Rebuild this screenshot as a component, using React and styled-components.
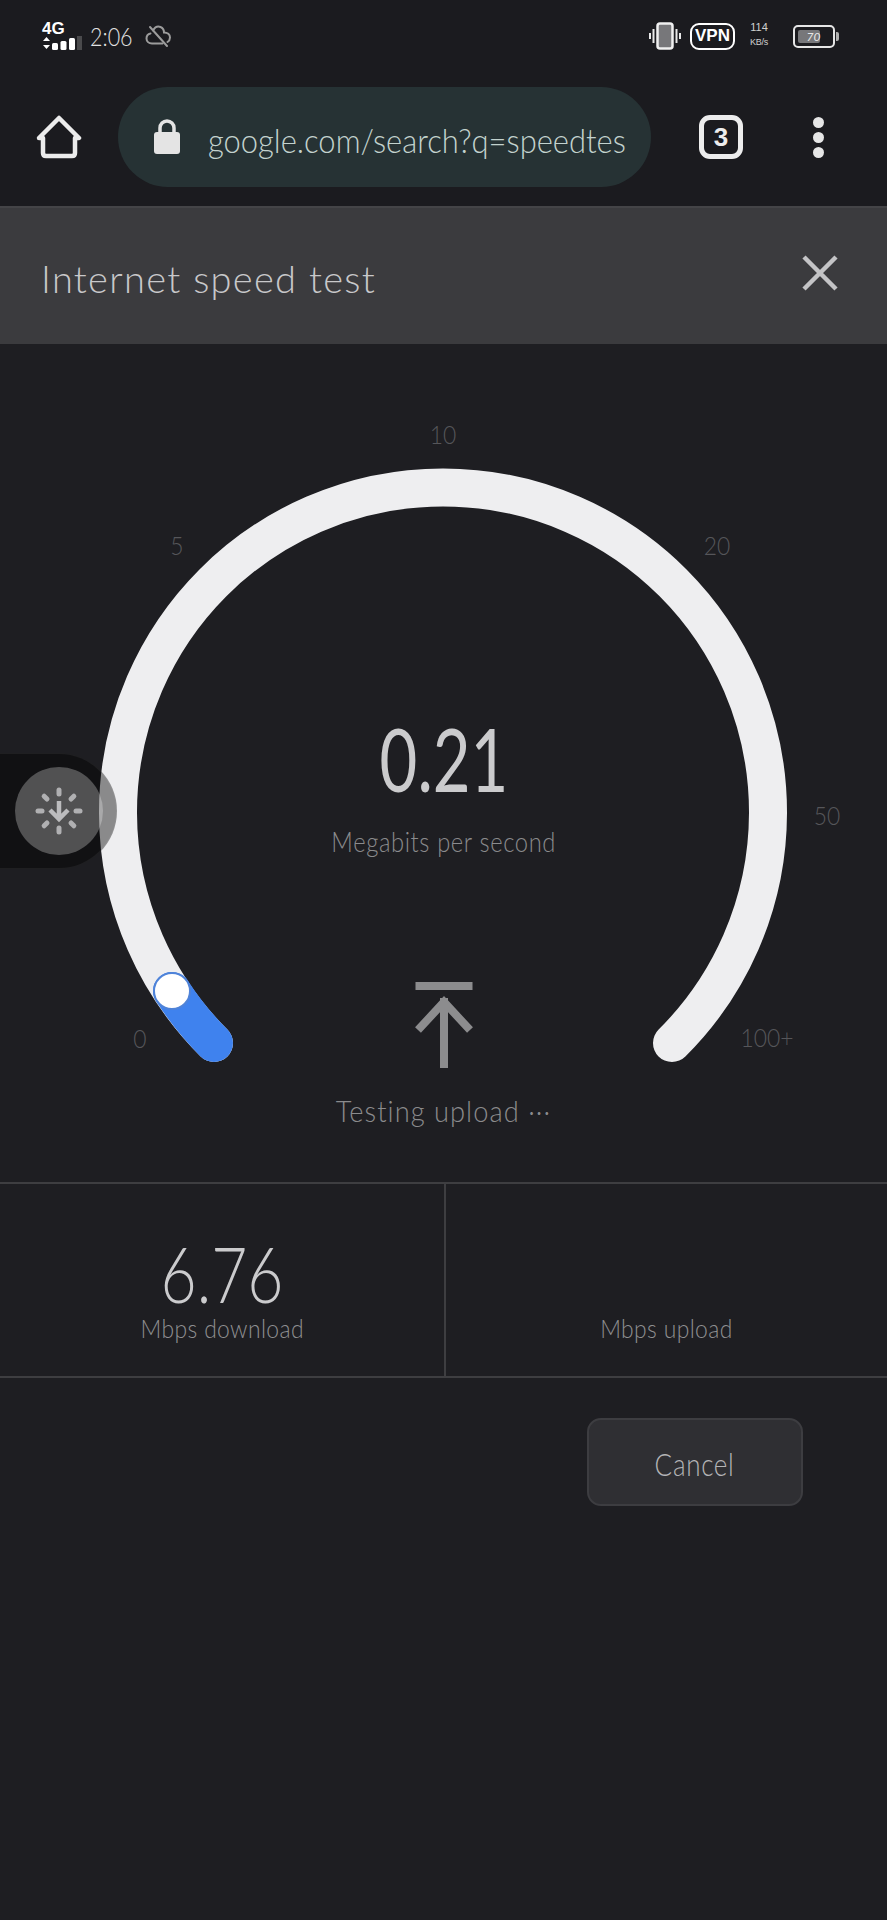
import React from "react";
import styled, { createGlobalStyle } from "styled-components";

const hand = `"Lato", "Open Sans", sans-serif`;

const GlobalStyle = createGlobalStyle`
  html, body {
    margin: 0;
    padding: 0;
    background: #1e1e22;
  }
  * {
    box-sizing: border-box;
  }
`;

const Page = styled.div`
  width: 887px;
  height: 1920px;
  background: #1e1e22;
  overflow: hidden;
  font-family: ${hand};
`;

const TopArea = styled.div`
  background: #1b1b1f;
`;

const StatusBar = styled.div`
  height: 68px;
  display: flex;
  align-items: center;
  justify-content: space-between;
  padding: 4px 49px 0 42px;
`;

const StatusGroup = styled.div`
  display: flex;
  align-items: center;
  gap: ${({ $gap }) => $gap}px;
`;

const NetworkBadge = styled.div`
  display: flex;
  flex-direction: column;
  width: 40px;
  color: #fff;
  font: 700 17px/14px "Liberation Sans", sans-serif;
`;

const Clock = styled.span`
  width: 39px;
  color: #e2e2e2;
  font: 300 25px "Lato", sans-serif;
  transform: scaleX(0.86);
  transform-origin: left center;
  white-space: nowrap;
`;

const CloudIcon = styled.svg`
  margin-left: 8px;
`;

const VpnBadge = styled.span`
  width: 45px;
  height: 27px;
  border: 2.5px solid #fff;
  border-radius: 9px;
  display: flex;
  align-items: center;
  justify-content: center;
  color: #fff;
  font: 700 17px "Liberation Sans", sans-serif;
`;

const SpeedStack = styled.div`
  width: 20px;
  display: flex;
  flex-direction: column;
  align-items: center;
  color: #d0d0d0;
  font: 400 11px/15px "Liberation Sans", sans-serif;
  margin: -2px 15px 0 5px;
`;

const SpeedUnit = styled.span`
  font-size: 9px;
  letter-spacing: -0.3px;
`;

const Battery = styled.div`
  position: relative;
  width: 42px;
  height: 23px;
  border: 2px solid #e6e6e6;
  border-radius: 5px;
  padding: 3px;
  margin-right: 3px;

  &::after {
    content: "";
    position: absolute;
    right: -6px;
    top: 5px;
    width: 3px;
    height: 9px;
    border-radius: 0 2px 2px 0;
    background: #b0b0b0;
  }
`;

const BatteryFill = styled.div`
  width: ${({ $level }) => $level}%;
  height: 100%;
  background: #77777a;
  border-radius: 2px;
  color: #e8e8e8;
  font: italic 400 12px/13px "Lato", sans-serif;
  text-align: right;
`;

const Toolbar = styled.div`
  height: 138px;
  display: flex;
  align-items: center;
  padding: 0 0 0 36px;
`;

const UrlPill = styled.div`
  width: 533px;
  height: 100px;
  margin-left: 36px;
  border-radius: 50px;
  background: #263234;
  display: flex;
  align-items: center;
  padding: 0 0 0 35px;
  gap: 27px;
  flex-shrink: 0;
`;

const UrlText = styled.span`
  margin-top: 4px;
  color: #c3d2ce;
  font: 300 34px "Lato", sans-serif;
  white-space: nowrap;
  transform: scaleX(0.91);
  transform-origin: left center;
`;

const TabCount = styled.div`
  width: 44px;
  height: 44px;
  margin-left: 48px;
  border: 5px solid #ededed;
  border-radius: 11px;
  display: flex;
  align-items: center;
  justify-content: center;
  color: #ededed;
  font: 700 26px "Liberation Sans", sans-serif;
`;

const MenuDots = styled.div`
  margin-left: 70px;
  display: flex;
  flex-direction: column;
  gap: 4px;
`;

const Dot = styled.span`
  width: 11px;
  height: 11px;
  border-radius: 50%;
  background: #e6e6e6;
`;

const DialogHeader = styled.div`
  height: 138px;
  background: #3b3b3e;
  border-top: 2px solid #444447;
  display: flex;
  align-items: center;
  justify-content: space-between;
  padding: 0 49px 6px 41px;
`;

const DialogTitle = styled.h1`
  margin: 10px 0 0;
  color: #c8c8ca;
  font: 300 38px "Lato", sans-serif;
  letter-spacing: 1.3px;
`;

const GaugeSection = styled.section`
  position: relative;
  height: 838px;
`;

const GaugeSvg = styled.svg`
  display: block;
  width: 887px;
  height: 838px;
`;

const ScaleMark = styled.span`
  position: absolute;
  left: ${({ $x }) => $x}px;
  top: ${({ $y }) => $y}px;
  transform: translate(-50%, -50%) scaleX(0.88);
  color: #56565a;
  font: 300 26px "Lato", sans-serif;
`;

const Readout = styled.div`
  position: absolute;
  inset: 0;
  display: flex;
  flex-direction: column;
  align-items: center;
  padding-top: 360px;
`;

const ReadoutValue = styled.div`
  color: #cbcbcd;
  font: 400 88px/108px "Lato", sans-serif;
  transform: scaleX(0.74);
`;

const ReadoutUnit = styled.div`
  color: #8b8b8d;
  font: 300 27px/36px "Lato", sans-serif;
  letter-spacing: 0.7px;
  margin-top: 12px;
  transform: scaleX(0.88);
`;

const ArrowBox = styled.div`
  margin-top: 122px;
  height: 88px;
`;

const Phase = styled.div`
  margin-top: 22px;
  color: #8b8b8d;
  font: 300 29px/38px "Lato", sans-serif;
  letter-spacing: 1.1px;
  transform: scaleX(0.94);
`;

const SideDock = styled.div`
  position: absolute;
  left: 0;
  top: 409px;
  width: 117px;
  height: 116px;
  background: rgba(0, 0, 0, 0.42);
  border: 1px solid rgba(255, 255, 255, 0.06);
  border-left: 0;
  border-radius: 0 58px 58px 0;
  display: flex;
  align-items: center;
  padding-left: 15px;
`;

const DockButton = styled.div`
  width: 88px;
  height: 88px;
  border-radius: 50%;
  background: rgba(255, 255, 255, 0.27);
  display: flex;
  align-items: center;
  justify-content: center;
`;

const StatsRow = styled.div`
  height: 196px;
  display: grid;
  grid-template-columns: 444px 1fr;
  border-top: 2px solid #3e3e41;
  border-bottom: 2px solid #3e3e41;
`;

const StatCell = styled.div`
  display: flex;
  flex-direction: column;
  align-items: center;
  justify-content: flex-end;
  padding-bottom: 32px;
  border-left: ${({ $divided }) => ($divided ? "2px solid #3e3e41" : "0")};
`;

const StatValue = styled.div`
  color: #cbcbcd;
  font: 300 76px/60px "Lato", sans-serif;
  margin-bottom: 8px;
  transform: scaleX(0.82);
`;

const StatLabel = styled.div`
  color: #8f8f91;
  font: 300 25px/32px "Lato", sans-serif;
  letter-spacing: 0.4px;
  transform: scaleX(0.915);
`;

const ActionRow = styled.div`
  display: flex;
  justify-content: flex-end;
  padding: 40px 84px 0 0;
`;

const CancelButton = styled.button`
  width: 216px;
  height: 88px;
  padding: 4px 0 0;
  background: #2f2f33;
  border: 2px solid #3d3d41;
  border-radius: 14px;
  color: #b4b4b6;
  font: 300 31px "Lato", sans-serif;
  letter-spacing: 0.8px;
`;

const CancelLabel = styled.span`
  display: inline-block;
  transform: scaleX(0.84);
`;

const LockSvg = styled.svg`
  flex-shrink: 0;
`;

const SignalIcon = () => (
  <svg width="40" height="15" viewBox="0 0 40 15">
    <path d="M4.5 1 L8 5 H1 Z M1 9 H8 L4.5 13 Z" fill="#fff" />
    <rect x="10" y="7" width="6" height="7" rx="1.5" fill="#fff" />
    <rect x="18.5" y="5" width="6" height="9" rx="1.5" fill="#fff" />
    <rect x="27" y="2" width="6" height="12" rx="1.5" fill="#fff" />
    <rect x="35" y="0" width="5" height="14" fill="#4a4a4c" />
  </svg>
);

const CloudOffIcon = () => (
  <CloudIcon width="27" height="24" viewBox="0 0 27 24">
    <path
      d="M8 6.5 C10 3 13 2 15.5 3 C18 4 19 6 19 8.5 C22.5 8.5 25 10.5 25 13.5 C25 15.5 24 17 22.5 18 M17.5 19.5 H7 C3.8 19.5 1.5 17.5 1.5 14.5 C1.5 12 3 10 5.5 9.5"
      fill="none"
      stroke="#9c9c9c"
      strokeWidth="2"
      strokeLinecap="round"
    />
    <path d="M5 3 L22 22" stroke="#9c9c9c" strokeWidth="2" strokeLinecap="round" />
  </CloudIcon>
);

const VibrateIcon = () => (
  <svg width="32" height="28" viewBox="0 0 32 28">
    <rect x="8.5" y="1.5" width="15" height="25" rx="2.5" fill="#77777a" stroke="#f0f0f0" strokeWidth="2.5" />
    <path d="M4.5 7 V21 M1 11 V17 M27.5 7 V21 M31 11 V17" stroke="#e8e8e8" strokeWidth="2" fill="none" />
  </svg>
);

const HomeIcon = () => (
  <svg width="46" height="44" viewBox="0 0 46 44">
    <path
      d="M23 3 L43 23 H39 V38 Q39 41 36 41 H10 Q7 41 7 38 V23 H3 Z"
      fill="none"
      stroke="#ececec"
      strokeWidth="4.5"
      strokeLinejoin="round"
    />
  </svg>
);

const LockIcon = () => (
  <LockSvg width="28" height="36" viewBox="0 0 28 36">
    <path d="M7 14 V9 a7 7 0 0 1 14 0 V14" fill="none" stroke="#e4e4e4" strokeWidth="3.5" />
    <rect x="1" y="13" width="26" height="22" rx="3" fill="#e4e4e4" />
  </LockSvg>
);

const CloseIcon = () => (
  <svg width="36" height="36" viewBox="0 0 36 36">
    <path d="M2 2 L34 34 M34 2 L2 34" stroke="#c4c4c6" strokeWidth="4.5" fill="none" />
  </svg>
);

const UploadArrow = () => (
  <svg width="58" height="88" viewBox="0 0 58 88">
    <path
      d="M0.5 4 H57.5 M29 16 V86 M3 48 L29 20 L55 48"
      fill="none"
      stroke="#8c8c8e"
      strokeWidth="8"
    />
  </svg>
);

const DockIcon = () => {
  const spokes = [0, 45, 90, 135, 180, 225, 270, 315];
  return (
    <svg width="48" height="48" viewBox="-24 -24 48 48">
      {spokes.map((deg) => (
        <line
          key={deg}
          x1="0"
          y1="-21"
          x2="0"
          y2="-17"
          stroke="#b0b0b2"
          strokeWidth="5"
          strokeLinecap="round"
          transform={`rotate(${deg})`}
        />
      ))}
      <path d="M0 -10 V8 M-9 -1 L0 8 L9 -1" fill="none" stroke="#bcbcbe" strokeWidth="4.5" />
    </svg>
  );
};

const marks = [
  { label: "0", x: 140, y: 694 },
  { label: "5", x: 177, y: 201 },
  { label: "10", x: 443, y: 90 },
  { label: "20", x: 717, y: 201 },
  { label: "50", x: 827, y: 471 },
  { label: "100+", x: 767, y: 693 },
];

export default function App() {
  return (
    <Page>
      <GlobalStyle />
      <TopArea>
        <StatusBar>
          <StatusGroup $gap={8}>
            <NetworkBadge>
              4G
              <SignalIcon />
            </NetworkBadge>
            <Clock>2:06</Clock>
            <CloudOffIcon />
          </StatusGroup>
          <StatusGroup $gap={9}>
            <VibrateIcon />
            <VpnBadge>VPN</VpnBadge>
            <SpeedStack>
              114
              <SpeedUnit>KB/s</SpeedUnit>
            </SpeedStack>
            <Battery>
              <BatteryFill $level={70}>70</BatteryFill>
            </Battery>
          </StatusGroup>
        </StatusBar>
        <Toolbar>
          <HomeIcon />
          <UrlPill>
            <LockIcon />
            <UrlText>google.com/search?q=speedtes</UrlText>
          </UrlPill>
          <TabCount>3</TabCount>
          <MenuDots>
            <Dot />
            <Dot />
            <Dot />
          </MenuDots>
        </Toolbar>
      </TopArea>
      <DialogHeader>
        <DialogTitle>Internet speed test</DialogTitle>
        <CloseIcon />
      </DialogHeader>
      <GaugeSection>
        <GaugeSvg viewBox="0 0 887 838">
          <path
            d="M214 699 A325 325 0 1 1 672 699"
            fill="none"
            stroke="#eeeef0"
            strokeWidth="38"
            strokeLinecap="round"
          />
          <path
            d="M172 647 A325 325 0 0 0 214 699"
            fill="none"
            stroke="#3f82ee"
            strokeWidth="38"
            strokeLinecap="round"
          />
          <circle cx="172" cy="647" r="18" fill="#fff" stroke="#4f83d8" strokeWidth="2" />
        </GaugeSvg>
        {marks.map((m) => (
          <ScaleMark key={m.label} $x={m.x} $y={m.y}>
            {m.label}
          </ScaleMark>
        ))}
        <Readout>
          <ReadoutValue>0.21</ReadoutValue>
          <ReadoutUnit>Megabits per second</ReadoutUnit>
          <ArrowBox>
            <UploadArrow />
          </ArrowBox>
          <Phase>Testing upload ···</Phase>
        </Readout>
        <SideDock>
          <DockButton>
            <DockIcon />
          </DockButton>
        </SideDock>
      </GaugeSection>
      <StatsRow>
        <StatCell>
          <StatValue>6.76</StatValue>
          <StatLabel>Mbps download</StatLabel>
        </StatCell>
        <StatCell $divided>
          <StatLabel>Mbps upload</StatLabel>
        </StatCell>
      </StatsRow>
      <ActionRow>
        <CancelButton>
          <CancelLabel>Cancel</CancelLabel>
        </CancelButton>
      </ActionRow>
    </Page>
  );
}
